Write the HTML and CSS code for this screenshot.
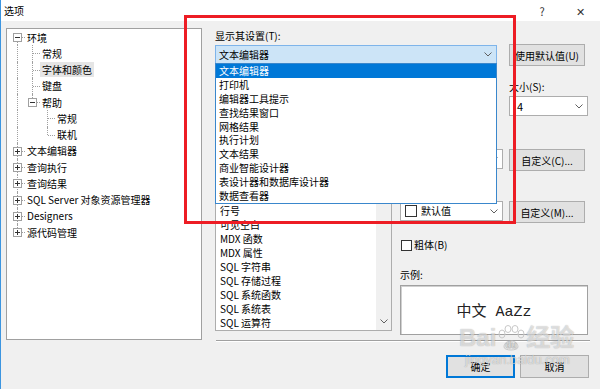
FILE: index.html
```html
<!DOCTYPE html>
<html lang="zh-CN">
<head>
    <meta charset="UTF-8">
    <meta name="viewport" content="width=device-width, initial-scale=1.0">
    <title>选项</title>
    <link rel="stylesheet" href="styles.css">
</head>
<body>
<div class="window">
    <div class="titlebar">
        <span class="title">选项</span>
        <span class="tb-help">?</span>
        <span class="tb-close">✕</span>
    </div>

    <div class="content">
        <!-- 左侧树 -->
        <div class="tree">
            <div class="row"><span class="c bx down"><span class="box"></span></span><span class="label">环境</span></div>
            <div class="row"><span class="c v"></span><span class="c t"></span><span class="label">常规</span></div>
            <div class="row"><span class="c v"></span><span class="c t"></span><span class="label selected">字体和颜色</span></div>
            <div class="row"><span class="c v"></span><span class="c t"></span><span class="label">键盘</span></div>
            <div class="row"><span class="c v"></span><span class="c bx up"><span class="box"></span></span><span class="label">帮助</span></div>
            <div class="row"><span class="c v"></span><span class="c"></span><span class="c t"></span><span class="label">常规</span></div>
            <div class="row"><span class="c v"></span><span class="c"></span><span class="c l"></span><span class="label">联机</span></div>
            <div class="row"><span class="c bx full"><span class="box plus"></span></span><span class="label">文本编辑器</span></div>
            <div class="row"><span class="c bx full"><span class="box plus"></span></span><span class="label">查询执行</span></div>
            <div class="row"><span class="c bx full"><span class="box plus"></span></span><span class="label">查询结果</span></div>
            <div class="row"><span class="c bx full"><span class="box plus"></span></span><span class="label">SQL Server 对象资源管理器</span></div>
            <div class="row"><span class="c bx full"><span class="box plus"></span></span><span class="label">Designers</span></div>
            <div class="row"><span class="c bx up"><span class="box plus"></span></span><span class="label">源代码管理</span></div>
        </div>

        <!-- 右侧设置 -->
        <div class="panel">
            <div class="lbl">显示其设置(T):</div>
            <div class="line">
                <div class="combo wide pressed">
                    <span class="combo-text">文本编辑器</span>
                    <svg class="chev" width="8" height="5" viewBox="0 0 8 5"><path d="M0.5 0.5 L4 4 L7.5 0.5" fill="none" stroke="#606060"/></svg>
                    <ul class="dropdown">
                        <li class="active">文本编辑器</li>
                        <li>打印机</li>
                        <li>编辑器工具提示</li>
                        <li>查找结果窗口</li>
                        <li>网格结果</li>
                        <li>执行计划</li>
                        <li>文本结果</li>
                        <li>商业智能设计器</li>
                        <li>表设计器和数据库设计器</li>
                        <li>数据查看器</li>
                    </ul>
                </div>
                <button class="btn">使用默认值(U)</button>
            </div>

            <div class="line labels">
                <span class="lbl">大小(S):</span>
            </div>
            <div class="line">
                <div class="combo wide"></div>
                <div class="combo size">
                    <span class="combo-text">4</span>
                    <svg class="chev" width="8" height="5" viewBox="0 0 8 5"><path d="M0.5 0.5 L4 4 L7.5 0.5" fill="none" stroke="#606060"/></svg>
                </div>
            </div>

            <div class="main">
                <div class="items-col">
                    <div class="listbox">
                        <ul class="items">
                            <li>行号</li>
                            <li>可见空白</li>
                            <li>MDX 函数</li>
                            <li>MDX 属性</li>
                            <li>SQL 字符串</li>
                            <li>SQL 存储过程</li>
                            <li>SQL 系统函数</li>
                            <li>SQL 系统表</li>
                            <li>SQL 运算符</li>
                        </ul>
                        <div class="scrollbar">
                            <svg width="8" height="5" viewBox="0 0 8 5"><path d="M0.5 4.5 L4 1 L7.5 4.5" fill="none" stroke="#606060"/></svg>
                            <svg width="8" height="5" viewBox="0 0 8 5"><path d="M0.5 0.5 L4 4 L7.5 0.5" fill="none" stroke="#606060"/></svg>
                        </div>
                    </div>
                </div>

                <div class="props-col">
                    <div class="line">
                        <div class="combo color">
                            <span class="swatch"></span><span class="combo-text">默认值</span>
                            <svg class="chev" width="8" height="5" viewBox="0 0 8 5"><path d="M0.5 0.5 L4 4 L7.5 0.5" fill="none" stroke="#606060"/></svg>
                        </div>
                        <button class="btn">自定义(C)...</button>
                    </div>
                    <div class="line second">
                        <div class="combo color">
                            <span class="swatch"></span><span class="combo-text">默认值</span>
                            <svg class="chev" width="8" height="5" viewBox="0 0 8 5"><path d="M0.5 0.5 L4 4 L7.5 0.5" fill="none" stroke="#606060"/></svg>
                        </div>
                        <button class="btn">自定义(M)...</button>
                    </div>
                    <label class="check"><span class="checkbox"></span>粗体(B)</label>
                    <div class="lbl sample-lbl">示例:</div>
                    <div class="sample">中文 AaZz</div>
                </div>
            </div>

            <div class="separator"></div>
            <div class="actions">
                <button class="btn default">确定</button>
                <button class="btn">取消</button>
            </div>
        </div>
    </div>

    <div class="highlight"></div>

    <div class="watermark">
        <div class="wm-logo">Bai<svg width="30" height="26" viewBox="0 0 30 26"><ellipse cx="6" cy="9" rx="3" ry="4" fill="none" stroke="#c8c8c8"/><ellipse cx="12" cy="4" rx="3" ry="3.5" fill="none" stroke="#c8c8c8"/><ellipse cx="19" cy="4" rx="3" ry="3.5" fill="none" stroke="#c8c8c8"/><ellipse cx="25" cy="9" rx="3" ry="4" fill="none" stroke="#c8c8c8"/><path d="M8 22 C8 14 22 14 22 22 C22 26 8 26 8 22 Z" fill="none" stroke="#c8c8c8"/><text x="15" y="23" text-anchor="middle" font-size="9" fill="#fff" stroke="#c8c8c8" stroke-width="0.4">du</text></svg>经验</div>
        <div class="wm-url">jingyan.baidu.com</div>
    </div>
</div>
</body>
</html>
```

FILE: styles.css
```css
body {
    margin: 0;
    padding: 0;
    font-family: "Noto Sans CJK SC", "Noto Sans", sans-serif;
    font-size: 10px;
    color: #000;
    background-color: #f0f0f0;
}
ul {
    list-style: none;
    margin: 0;
    padding: 0;
}
.window {
    position: relative;
    width: 600px;
    height: 389px;
    box-sizing: border-box;
    border-left: 1px solid #3c95e0;
    background-color: #f0f0f0;
    overflow: hidden;
}
.titlebar {
    display: flex;
    align-items: center;
    height: 21px;
    padding-left: 3px;
    background-color: #fff;
}
.title {
    flex: 1;
    line-height: 21px;
}
.tb-help {
    width: 36px;
    text-align: center;
    font-size: 11px;
    color: #333;
}
.tb-close {
    width: 40px;
    text-align: center;
    font-size: 11px;
    color: #333;
}
.content {
    display: flex;
    padding: 7px 0 0 5px;
}

/* 树 */
.tree {
    width: 196px;
    height: 312px;
    box-sizing: border-box;
    border: 1px solid #a0a0a0;
    background-color: #fff;
    padding-left: 3px;
}
.row {
    display: flex;
    align-items: center;
    height: 16.25px;
    white-space: nowrap;
}
.c {
    position: relative;
    flex: none;
    width: 15px;
    height: 100%;
}
.c.v::before,
.c.t::before,
.c.l::before,
.c.bx::before {
    content: "";
    position: absolute;
    left: 7px;
    border-left: 1px dotted #a0a0a0;
}
.c.v::before,
.c.t::before,
.c.bx.full::before {
    top: 0;
    bottom: 0;
}
.c.l::before,
.c.bx.up::before {
    top: 0;
    height: 8px;
}
.c.bx.down::before {
    top: 8px;
    bottom: 0;
}
.c.t::after,
.c.l::after,
.c.bx::after {
    content: "";
    position: absolute;
    left: 8px;
    top: 8px;
    width: 7px;
    border-top: 1px dotted #a0a0a0;
}
.box {
    position: absolute;
    left: 3px;
    top: 4px;
    width: 9px;
    height: 9px;
    box-sizing: border-box;
    border: 1px solid #a0a0a0;
    background-color: #fff;
    z-index: 1;
}
.box::before {
    content: "";
    position: absolute;
    left: 1px;
    top: 3px;
    width: 5px;
    height: 1px;
    background-color: #333;
}
.box.plus::after {
    content: "";
    position: absolute;
    left: 3px;
    top: 1px;
    width: 1px;
    height: 5px;
    background-color: #333;
}
.label {
    padding: 0 2px;
    line-height: 15px;
}
.label.selected {
    background-color: #e5e5e5;
}

/* 右侧面板 */
.panel {
    width: 375px;
    margin-left: 13px;
}
.lbl {
    line-height: 16px;
    white-space: nowrap;
}
.line {
    display: flex;
    align-items: flex-start;
    gap: 12px;
}
.panel > .line:first-of-type {
    margin-top: 1px;
}
.labels {
    margin-top: 13px;
    height: 16px;
    padding-left: 294px;
}
.labels + .line {
    margin-top: 1px;
}
.combo {
    position: relative;
    display: flex;
    align-items: center;
    box-sizing: border-box;
    height: 20px;
    border: 1px solid #adadad;
    background-color: #fff;
    padding-left: 3px;
}
.combo.wide {
    width: 282px;
}
.combo.pressed {
    margin-top: 1px;
    height: 19px;
    background-color: #cce4f7;
    border-color: #7eb4ea;
}
.combo.size {
    width: 79px;
    padding-left: 7px;
}
.combo-text {
    flex: 1;
    line-height: 16px;
    white-space: nowrap;
}
.size .combo-text {
    font-size: 11px;
}
.chev {
    margin-right: 4px;
}
.dropdown {
    position: absolute;
    left: -1px;
    top: 17px;
    width: 282px;
    box-sizing: border-box;
    border: 1px solid #3a87cc;
    background-color: #fff;
    z-index: 5;
}
.dropdown li {
    height: 13.9px;
    line-height: 13.9px;
    padding-left: 3px;
}
.dropdown li.active {
    background-color: #0078d7;
    color: #fff;
}
.btn {
    box-sizing: border-box;
    width: 76px;
    height: 22px;
    padding: 0;
    border: 1px solid #adadad;
    background-color: #e1e1e1;
    font-family: inherit;
    font-size: 10px;
    color: #000;
    white-space: nowrap;
}
.main {
    display: flex;
    gap: 8px;
    margin-top: 2px;
}
.items-col {
    width: 177px;
    padding-top: 16px;
}
/* 列表已滚动到底部 */
.listbox {
    display: flex;
    height: 197px;
    box-sizing: border-box;
    border: 1px solid #adadad;
    background-color: #fff;
}
.items {
    flex: 1;
    display: flex;
    flex-direction: column;
    justify-content: flex-end;
    padding-bottom: 0.5px;
    overflow: hidden;
}
.items li {
    height: 13.9px;
    line-height: 13.9px;
    padding-left: 4px;
    white-space: nowrap;
}
.scrollbar {
    display: flex;
    flex-direction: column;
    justify-content: space-between;
    align-items: center;
    width: 15px;
    padding: 6px 0;
    box-sizing: border-box;
    background-color: #f0f0f0;
}
.props-col {
    width: 188px;
    padding-top: 29px;
}
.props-col .line {
    gap: 6px;
    margin-top: 2px;
}
.props-col .line.second {
    margin-top: 30px;
}
.combo.color {
    width: 103px;
    padding-left: 4px;
}
.swatch {
    width: 12px;
    height: 12px;
    box-sizing: border-box;
    border: 1px solid #333;
    margin-right: 4px;
}
.check {
    display: flex;
    align-items: center;
    margin-top: 14px;
    line-height: 16px;
}
.checkbox {
    width: 11px;
    height: 11px;
    box-sizing: border-box;
    border: 1px solid #333;
    background-color: #fff;
    margin: 0 2px 0 1px;
}
.sample-lbl {
    margin-top: 14px;
}
.sample {
    margin-top: 2px;
    height: 50px;
    box-sizing: border-box;
    border: 1px solid #a0a0a0;
    box-shadow: inset 1px 1px 0 #d0d0d0;
    background-color: #fff;
    display: flex;
    align-items: center;
    justify-content: center;
    font-family: "Liberation Mono", "Noto Sans CJK SC", monospace;
    font-size: 15px;
    color: #222;
}
.separator {
    margin-top: 5px;
    margin-left: 1px;
    border-top: 1px solid #a0a0a0;
    border-bottom: 1px solid #fff;
}
.actions {
    display: flex;
    justify-content: flex-end;
    gap: 5px;
    margin-top: 13px;
    padding-right: 1px;
}
.actions .btn {
    width: 69px;
    height: 23px;
}
.btn.default {
    border-color: #0078d7;
    box-shadow: inset 0 0 0 1px #0078d7;
}

/* 红框标注 */
.highlight {
    position: absolute;
    left: 183px;
    top: 15px;
    width: 332px;
    height: 209px;
    box-sizing: border-box;
    border: 3px solid #ed1c24;
    z-index: 10;
}

/* 水印 */
.watermark {
    position: absolute;
    left: 458px;
    top: 324px;
    z-index: 11;
    color: rgba(255, 255, 255, 0.6);
    text-shadow: 0 0 1px rgba(0, 0, 0, 0.35);
    pointer-events: none;
}
.wm-logo {
    display: flex;
    align-items: center;
    font-family: "Liberation Sans", "Noto Sans CJK SC", sans-serif;
    font-size: 24px;
    font-weight: bold;
    line-height: 28px;
}
.wm-url {
    font-family: "Liberation Sans", sans-serif;
    font-size: 13px;
    line-height: 16px;
    margin-left: 6px;
}
```
